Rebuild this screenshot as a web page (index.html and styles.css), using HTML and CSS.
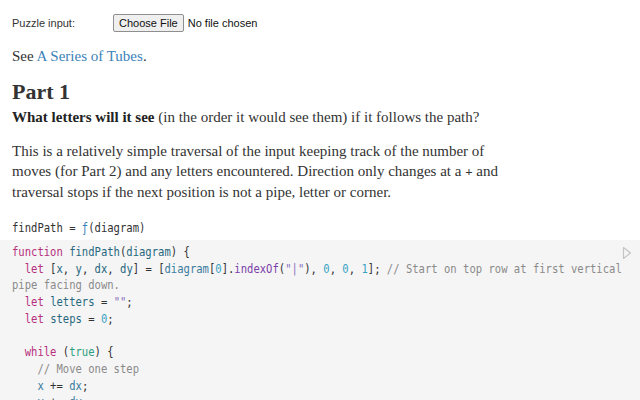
FILE: index.html
```html
<!DOCTYPE html>
<html>
<head>
<meta charset="utf-8">
<link rel="stylesheet" href="styles.css">
</head>
<body>
<div class="page">
  <form class="input-row">
    <label class="input-label">Puzzle input:</label>
    <div class="file"><span class="file-btn">Choose File</span><span class="file-text">No file chosen</span></div>
  </form>
  <p class="prose see">See <a href="#" class="link">A Series of Tubes</a>.</p>
  <h2 class="heading">Part 1</h2>
  <p class="prose question"><strong>What letters will it see</strong> (in the order it would see them) if it follows the path?</p>
  <p class="prose para">This is a relatively simple traversal of the input keeping track of the number of<br>moves (for Part 2) and any letters encountered. Direction only changes at a <span class="plus">+</span> and<br>traversal stops if the next position is not a pipe, letter or corner.</p>
  <div class="cell-out"><div class="mono">findPath = <span class="fn">ƒ</span>(diagram)</div></div>
</div>
<div class="code-cell">
  <svg class="run" width="10" height="14" viewBox="0 0 10 14"><path d="M1.5 1.5 L8.5 7 L1.5 12.5 Z" fill="none" stroke="#c4c4c4" stroke-width="1.2" stroke-linejoin="round"/></svg>
  <div class="code mono">
    <div class="line"><span class="k">function</span> <span class="d">findPath</span>(<span class="d">diagram</span>) {</div>
    <div class="line">  <span class="k">let</span> [<span class="d">x</span>, <span class="d">y</span>, <span class="d">dx</span>, <span class="d">dy</span>] = [<span class="v">diagram</span>[<span class="n">0</span>].<span class="p">indexOf</span>(<span class="s">"|"</span>), <span class="n">0</span>, <span class="n">0</span>, <span class="n">1</span>]; <span class="c">// Start on top row at first vertical</span></div>
    <div class="line"><span class="c">pipe facing down.</span></div>
    <div class="line">  <span class="k">let</span> <span class="d">letters</span> = <span class="s">""</span>;</div>
    <div class="line">  <span class="k">let</span> <span class="d">steps</span> = <span class="n">0</span>;</div>
    <div class="line"> </div>
    <div class="line">  <span class="k">while</span> (<span class="t">true</span>) {</div>
    <div class="line">    <span class="c">// Move one step</span></div>
    <div class="line">    <span class="v">x</span> += <span class="v">dx</span>;</div>
    <div class="line">    <span class="v">y</span> += <span class="v">dy</span>;</div>
  </div>
</div>
</body>
</html>
```
FILE: styles.css
```css
html, body {
  margin: 0;
  padding: 0;
  background: #fff;
  color: #333;
}
.page {
  padding: 0 12px;
}
.input-row {
  display: flex;
  align-items: center;
  height: 44px;
  margin: 0;
  padding-top: 1px;
  font-family: "Liberation Sans", Arial, sans-serif;
  font-size: 11px;
  color: #333;
}
.input-label {
  width: 101px;
}
.file {
  display: flex;
  align-items: center;
  font-size: 11px;
  color: #111;
}
.file-btn {
  display: inline-block;
  box-sizing: border-box;
  height: 18px;
  line-height: 16px;
  padding: 0 5px;
  border: 1px solid #8f8f8f;
  border-radius: 2px;
  background: #efefef;
  color: #111;
}
.file-text {
  margin-left: 4px;
}
.prose {
  font-family: "Liberation Serif", "Times New Roman", serif;
  font-size: 15px;
  line-height: 20px;
  margin: 0;
  color: #333;
}
.see {
  margin-top: 1px;
}
.link {
  color: #3b82b8;
  text-decoration: none;
}
.heading {
  font-family: "Liberation Serif", "Times New Roman", serif;
  font-size: 22px;
  font-weight: 700;
  line-height: 26px;
  margin: 13px 0 0;
  color: #333;
}
.question {
  margin-top: 2px;
}
.question strong {
  font-weight: 700;
  color: #222;
}
.para {
  margin-top: 14px;
}
.plus {
  font-weight: 700;
  font-size: 13px;
}
.mono {
  font-family: "DejaVu Sans Mono", monospace;
  font-size: 11.5px;
  transform: scaleX(0.917);
  transform-origin: 0 0;
}
.cell-out {
  line-height: 16px;
  margin-top: 18px;
  padding-bottom: 4px;
  color: #333;
}
.fn {
  color: #3b82b8;
}
.code-cell {
  position: relative;
  background: #f5f5f5;
  padding: 4px 12px 0;
  height: 200px;
}
.run {
  position: absolute;
  right: 8px;
  top: 6px;
}
.code {
  width: 674px;
  line-height: 16.7px;
  color: #333;
}
.line {
  white-space: pre;
  height: 16.7px;
}
.k { color: #b5307d; }
.d { color: #27687f; }
.v { color: #3a7ca0; }
.p { color: #7b3fa8; }
.n { color: #3aa2c4; }
.s { color: #8a6fc0; }
.t { color: #2a9d80; }
.c { color: #8a8a8a; }
```
